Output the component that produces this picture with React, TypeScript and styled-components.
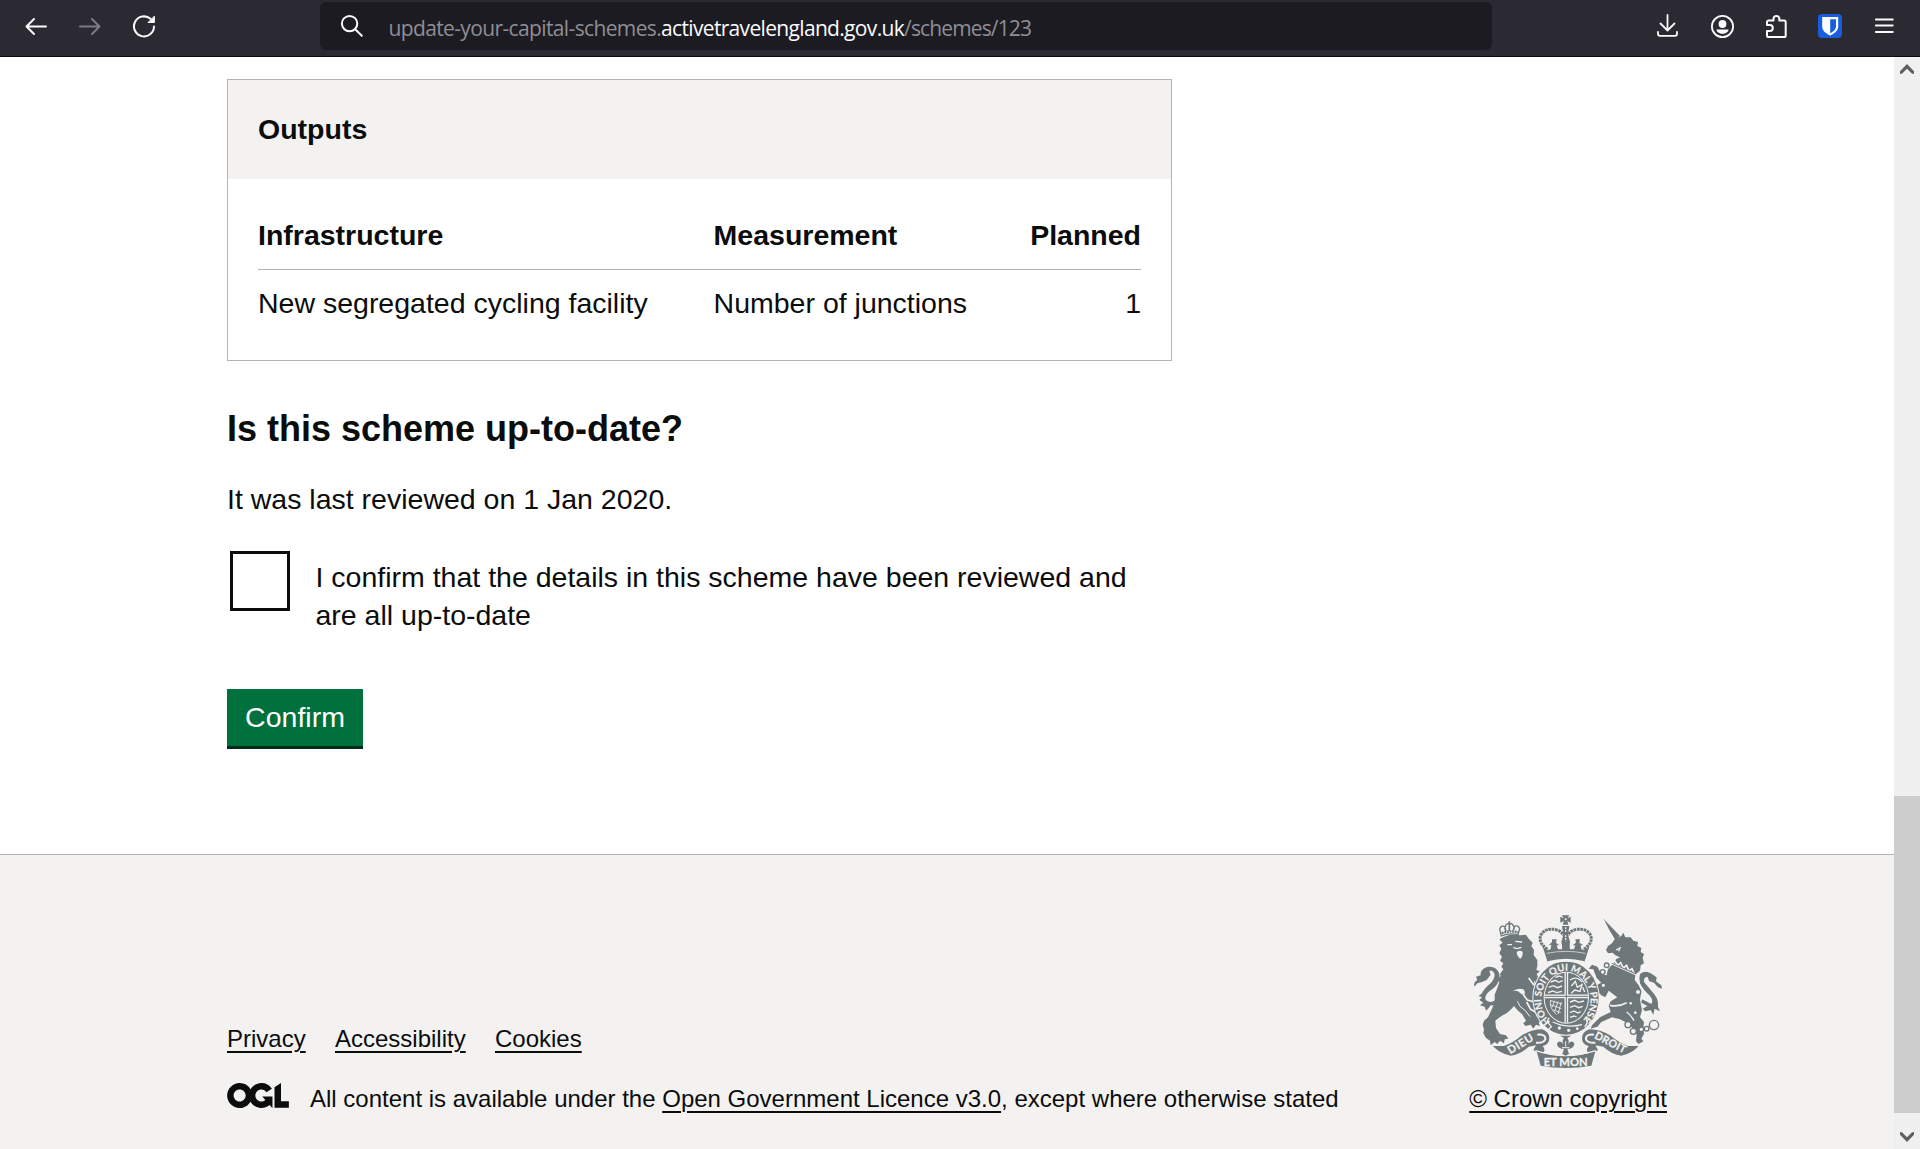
import React from "react";
import styled, { createGlobalStyle } from "styled-components";

const ink = "#0b0c0c";
const rule = "#b1b4b6";
const shade = "#f3f2f1";
const crest = "#6e7779";

const GlobalStyle = createGlobalStyle`
  *, *::before, *::after { box-sizing: border-box; }
  html, body { margin: 0; height: 100%; overflow: hidden; background: #fff; }
  h1, h2, h3, p { margin: 0; }
`;

const Window = styled.div`
  display: flex;
  flex-direction: column;
  width: 100%;
  height: 1149px;
  overflow: hidden;
  color: ${ink};
  font-family: "Liberation Sans", Arial, sans-serif;
`;

const Toolbar = styled.header`
  display: flex;
  align-items: flex-start;
  flex: none;
  height: 57px;
  padding-top: 2px;
  background: #2b2a33;
  border-bottom: 1px solid #0c0b10;
`;

const NavButtons = styled.nav`
  display: flex;
  gap: 30px;
  width: 320px;
  padding: 12px 0 0 24px;
`;

const AddressBar = styled.div`
  display: flex;
  align-items: flex-start;
  width: 1172px;
  height: 48px;
  padding: 12px 0 0 20px;
  background: #1c1b22;
  border-radius: 6px;
`;

const Address = styled.div`
  display: flex;
  margin-left: 24.5px;
  font-family: "Open Sans", "Noto Sans", sans-serif;
  font-size: 21px;
  line-height: 28px;
  white-space: nowrap;
`;

const AddressPart = styled.span<{ $strong?: boolean; $track: number }>`
  color: ${(p) => (p.$strong ? "#fbfbfe" : "#8f8e94")};
  letter-spacing: ${(p) => p.$track}px;
`;

const ToolIcons = styled.div`
  display: flex;
  gap: 30px;
  margin-left: auto;
  padding: 12px 24px 0 0;
`;

const Glyph = styled.svg<{ $dim?: boolean }>`
  display: block;
  flex: none;
  width: 24px;
  height: 24px;
  fill: none;
  stroke: ${(p) => (p.$dim ? "#7c7b81" : "#fbfbfe")};
  stroke-width: 2;
  stroke-linecap: round;
  stroke-linejoin: round;
`;

const Viewport = styled.div`
  display: flex;
  flex: 1;
  min-height: 0;
`;

const Page = styled.div`
  display: flex;
  flex-direction: column;
  flex: 1;
`;

const Main = styled.main`
  width: 1440px;
  height: 797px;
  margin: 0 auto;
  padding-top: 22px;
  font-size: 28.5px;
  line-height: 38px;
`;

const Column = styled.div`
  width: 945px;
`;

const Card = styled.section`
  height: 282px;
  border: 1px solid ${rule};
`;

const CardHeader = styled.div`
  height: 99px;
  padding: 30px 30px 0;
  background: ${shade};
`;

const CardTitle = styled.h2`
  font-size: 28.5px;
  line-height: 38px;
  font-weight: 700;
`;

const Table = styled.div`
  margin: 37px 30px 0;
`;

const Row = styled.div<{ $head?: boolean }>`
  display: grid;
  grid-template-columns: 455.6px 1fr auto;
  font-weight: ${(p) => (p.$head ? 700 : 400)};
  padding: ${(p) => (p.$head ? "0 0 15px" : "14px 0 0")};
  border-bottom: ${(p) => (p.$head ? `1px solid ${rule}` : "0")};
`;

const Question = styled.h2`
  margin-top: 45px;
  font-size: 36px;
  line-height: 45px;
  font-weight: 700;
`;

const Reviewed = styled.p`
  margin-top: 29px;
`;

const Choice = styled.label`
  display: flex;
  gap: 25.5px;
  margin-top: 33px;
  padding-left: 3px;
`;

const Box = styled.span`
  flex: none;
  width: 60px;
  height: 60px;
  border: 3px solid ${ink};
`;

const ChoiceText = styled.span`
  padding-top: 7px;
`;

const Confirm = styled.button`
  display: block;
  width: 136px;
  height: 60px;
  margin-top: 55px;
  padding: 0 0 1px;
  border: 0;
  border-bottom: 3px solid #002d18;
  background: #00703c;
  color: #fff;
  font: 28.5px/38px "Liberation Sans", Arial, sans-serif;
`;

const Footer = styled.footer`
  flex: 1;
  padding-top: 60px;
  background: ${shade};
  border-top: 1px solid ${rule};
  font-size: 24px;
  line-height: 30px;
`;

const FooterInner = styled.div`
  display: flex;
  justify-content: space-between;
  align-items: flex-end;
  width: 1440px;
  margin: 0 auto;
`;

const FooterLinks = styled.nav`
  display: flex;
  gap: 29.3px;
  margin-bottom: 30px;
`;

const Link = styled.a`
  color: ${ink};
  text-decoration: underline;
  text-decoration-thickness: 2px;
  text-underline-offset: 4px;
`;

const Licence = styled.div`
  display: flex;
`;

const OglLogo = styled.svg`
  display: block;
  width: 62px;
  height: 25px;
  margin: -1px 21px 0 0;
  fill: ${ink};
`;

const Copyright = styled.div`
  display: flex;
  flex-direction: column;
  align-items: center;
`;

const Arms = styled.svg`
  display: block;
  width: 188px;
  height: 153px;
  margin: 0 0 16px;
`;

const Scrollbar = styled.div`
  display: flex;
  flex-direction: column;
  align-items: center;
  flex: none;
  width: 26px;
  padding: 7px 0;
  background: #f0f0f0;
`;

const Thumb = styled.div`
  width: 26px;
  height: 317px;
  margin: auto 0 19px;
  background: #cdcdcd;
`;

const Chevron = styled.svg`
  flex: none;
  display: block;
  width: 14px;
  height: 10px;
  fill: #606060;
`;

const Lion = () => (
  <g>
    <path d="M124 108 L119 88 Q122 74 136 80 Q138 70 148 70 Q158 70 161 79 Q175 74 179 86 L174 104 Q148 98 124 108 Z" fill="none" stroke={crest} strokeWidth="4" />
    <path d="M125 100 Q150 90 175 97" stroke={crest} strokeWidth="7" fill="none" strokeDasharray="6 2" />
    <path d="M148 64 V92 M134 82 L138 94 M163 80 L160 91" stroke={crest} strokeWidth="5" fill="none" />
    <path
      fill={crest}
      d="M118 118 Q150 98 180 106 L198 104 L206 116 L218 128 L214 138 L222 150 L221 165 L232 180 L232 198
      L229 210 L240 214 L230 222 L236 236 L228 250 L222 240 L224 258 L236 270 L228 290 L238 302 L230 312 L236 340
      L226 330 L230 348 L243 362 L236 368 L240 378 L228 374 L220 386 L212 374 L196 378 L190 370 L198 362 L186 342
      L176 334 Q166 324 162 318 Q146 338 128 346 Q112 356 106 362 L108 384 L120 402 L138 406 L145 416 L134 418
      L132 430 L120 422 L112 432 L104 426 L92 436 L90 422 L78 414 L70 400 L72 388 L68 374 L72 362 L84 352 L96 326
      L104 306 L104 284 L112 264 L118 246 L112 240 L122 228 L120 222 L130 208 L124 200 L130 190 L120 182 L126 170 L118 160
      L124 146 L118 136 L128 128 Z"
    />
    <path
      fill={crest}
      d="M43 260 Q40 246 52 240 L48 230 L62 226 Q60 212 74 204 Q92 196 108 206 Q124 220 116 244 Q108 262 90 272
      Q74 284 76 298 Q84 310 100 304 L112 296 L110 308 Q100 318 92 316 L86 324 L78 332 L74 320 L60 316 L70 308
      L58 300 L66 292 L56 288 L66 280 Q72 266 92 250 Q108 232 102 218 Q94 208 88 214 L92 224 L80 240 L66 246 L52 250 Z"
    />
    <path d="M142 134 L156 134 M166 124 L186 126 M160 143 L172 146 L184 142" stroke={shade} strokeWidth="4" fill="none" />
    <path d="M170 156 Q180 148 188 156 Q189 170 181 176 Q171 170 170 156 Z" fill={shade} />
    <path d="M158 274 Q172 262 190 268 Q198 276 192 286 Q182 282 174 274 Q166 270 158 274 Z" fill={shade} />
    <path d="M206 234 L222 256 M190 284 L202 300 L224 306 M200 306 L212 328 L226 336" stroke={shade} strokeWidth="5" fill="none" />
    <path d="M172 304 Q176 320 196 332 L210 350" stroke={shade} strokeWidth="3" fill="none" />
  </g>
);

const Unicorn = () => (
  <g>
    <path d="M430 54 L436 62 L480 108 L466 120 L446 86 Z" fill={crest} />
    <path
      fill={crest}
      d="M464 118 L484 108 L490 98 L496 112 L512 112 L520 122 L534 126 L532 138 L544 144 L542 156 L552 162 L548 174
      L552 190 L542 196 L540 212 L528 222 L462 190 L468 178 L480 172 L466 166 L458 158 L444 160 L438 150 L444 138 L456 130 Z"
    />
    <path
      fill={crest}
      d="M456 194 L526 226 L524 240 L536 256 L544 272 L540 300 L546 330 L540 352 L552 366 L550 384 L552 402
      L544 416 L550 424 L536 432 L528 424 L530 404 L522 388 L500 368 L480 358 L456 352 L424 366 L412 380 L392 386
      L396 376 L420 352 L452 336 L446 318 L452 304 L472 292 L446 272 L436 292 L424 286 L410 272 L412 254 L424 248
      L410 234 L400 208 L386 206 L396 194 L412 200 L424 222 L440 226 L444 208 Z"
    />
    <path
      fill={crest}
      d="M540 222 Q556 210 572 220 L590 232 L588 244 L604 256 L606 266 L594 262 L582 248 L568 244 L562 230
      Q550 232 552 246 Q566 262 584 284 Q596 300 594 322 L600 334 L584 326 L580 344 L572 330 L556 334 L548 326
      L562 318 L544 308 L546 298 L574 312 Q582 302 568 286 Q548 268 540 250 Q536 234 540 222 Z"
    />
    <path d="M468 150 L480 144 L476 154" stroke={shade} strokeWidth="4" fill="none" />
    <path d="M462 180 L474 196 L482 188 L490 204 L500 196 L506 212 L516 206 L522 220" stroke={shade} strokeWidth="5" fill="none" />
    <path d="M456 190 L528 222" stroke={crest} strokeWidth="3" />
    <path d="M450 316 Q474 322 500 308" stroke={shade} strokeWidth="5" fill="none" />
    <path d="M500 336 Q512 344 522 362" stroke={shade} strokeWidth="4" fill="none" />
    {[
      [428, 216, 7],
      [440, 196, 7],
      [430, 256, 7],
      [534, 276, 8],
      [512, 310, 6],
      [526, 338, 6],
      [504, 374, 9],
      [520, 394, 9],
      [544, 388, 7],
      [560, 386, 7],
      [582, 375, 14],
    ].map(([x, y, r]) => (
      <circle key={`${x}-${y}`} cx={x} cy={y} r={r} fill={shade} stroke={crest} strokeWidth="4" />
    ))}
  </g>
);

const Crown = () => (
  <g>
    <path d="M305 46 H328 L322 55 L332 50 V68 L322 63 L325 74 H308 L312 63 L301 68 V50 L312 55 Z" fill={crest} />
    <circle cx="317" cy="58" r="3" fill={shade} />
    <path d="M262 148 Q234 128 242 106 Q254 84 284 88 Q304 92 310 106" fill="none" stroke={crest} strokeWidth="9" strokeDasharray="8 2" />
    <path d="M372 148 Q400 128 392 106 Q380 84 350 88 Q330 92 324 106" fill="none" stroke={crest} strokeWidth="9" strokeDasharray="8 2" />
    <path d="M306 78 H328 L324 104 L330 126 L326 148 H308 L304 126 L310 104 Z" fill={crest} />
    <path d="M317 82 V98 M317 106 V124" stroke={shade} strokeWidth="4" strokeDasharray="5 3" />
    <path
      fill={crest}
      d="M248 140 L262 150 L272 148 L274 134 L266 136 L276 126 L276 118 H290 L288 128 L298 136 L290 136 L294 148 L306 148
      L308 132 H328 L330 148 L342 148 L346 136 L338 136 L348 128 L346 118 H360 L358 128 L370 136 L362 136 L364 148
      L374 150 L388 140 L372 190 Q318 172 264 190 Z"
    />
    <path d="M260 160 Q318 148 376 160" fill="none" stroke={shade} strokeWidth="2" />
    <path d="M262 184 Q318 168 374 184 L372 194 Q318 176 264 194 Z" fill={shade} />
    <path d="M268 178 Q318 166 368 178" fill="none" stroke={crest} strokeWidth="3" />
  </g>
);

const Shield = () => (
  <g>
    <ellipse cx="318" cy="294" rx="101" ry="113" fill={shade} />
    <ellipse cx="318" cy="294" rx="98" ry="110" fill={crest} />
    <ellipse cx="319" cy="293" rx="68" ry="78" fill={shade} />
    <ellipse cx="319" cy="293" rx="65" ry="75" fill={crest} />
    <g fill="none" stroke={shade}>
      <path d="M319 217 V369 M254 289 H384" strokeWidth="11" />
      <path d="M272 246 l14 -5 l10 6 l12 -5 M266 262 l14 -5 l12 6 l14 -5 M264 278 l14 -5 l12 5 l16 -4 M286 232 l12 -4 l10 4" strokeWidth="4" />
      <path d="M330 240 Q350 226 366 246 M334 258 L346 244 L352 262 L366 254 L360 274 L344 270 L334 280 M368 262 L374 276" strokeWidth="4" />
      <path d="M330 306 l14 -5 l12 6 l16 -4 M330 322 l14 -5 l12 6 l12 -4 M330 338 l12 -5 l12 6 l8 -4 M330 352 l12 -4 l8 3" strokeWidth="4" />
      <path d="M272 300 Q266 324 290 344 M284 302 L276 322 M294 304 L284 334 M304 306 L294 342 M272 314 L304 326 M272 302 L306 312 M280 330 L302 338" strokeWidth="2.500" />
    </g>
    <path d="M319 217 V369 M254 289 H384" stroke={crest} strokeWidth="3" fill="none" />
    <path id="garter" d="M273 367 A 74 86 0 1 1 368 362" fill="none" />
    <text fill={shade} stroke={shade} strokeWidth="0.600" fontFamily="Lato, sans-serif" fontSize="29" fontWeight="700">
      <textPath href="#garter" startOffset="2" textLength="392" lengthAdjust="spacing">
        HONI SOIT QUI MAL Y PENSE
      </textPath>
    </text>
    <path d="M268 354 Q258 362 266 370 L274 380 L264 390 M278 366 Q320 386 366 374 M376 352 Q388 366 374 380" stroke={shade} strokeWidth="4" fill="none" />
    <circle cx="298" cy="384" r="5" fill={shade} />
    <circle cx="326" cy="391" r="5" fill={shade} />
    <circle cx="352" cy="386" r="4" fill={shade} />
  </g>
);

const Ribbon = () => (
  <g>
    <path
      fill={crest}
      d="M98 438 L132 438 Q160 428 186 406 Q214 388 246 388 Q268 396 268 414 Q268 434 248 438 Q262 456 240 462
      L220 450 L228 436 L206 440 Q180 464 152 467 Q122 462 98 438 Z"
    />
    <path
      fill={crest}
      d="M536 438 L504 438 Q476 428 450 406 Q422 388 388 388 Q366 396 366 414 Q366 434 386 438 Q372 456 394 462
      L414 450 L406 436 L430 440 Q456 464 484 467 Q514 462 536 438 Z"
    />
    <path d="M232 404 Q258 402 256 418 Q250 430 228 428 M402 404 Q376 402 378 418 Q384 430 406 428" fill="none" stroke={shade} strokeWidth="6" />
    <path d="M230 454 Q316 484 406 454 L394 497 Q318 511 242 497 Z" fill={crest} />
    <path d="M226 452 Q316 480 408 452" fill="none" stroke={shade} strokeWidth="4" />
    <g fill={shade} stroke={shade} strokeWidth="0.800" fontFamily="Lato, sans-serif" fontWeight="700">
      <text transform="translate(151 463) rotate(-31)" fontSize="33" textLength="84">DIEU</text>
      <text x="251" y="497" fontSize="34" textLength="132" lengthAdjust="spacingAndGlyphs">ET MON</text>
      <text transform="translate(401 414) rotate(27)" fontSize="32" textLength="102">DROIT</text>
    </g>
    <path
      fill={crest}
      d="M300 407 H334 L322 414 Q330 424 323 434 Q334 418 343 430 Q344 442 330 446 L322 446 L327 462 L317 467 L307 462
      L312 446 L304 446 Q290 442 291 430 Q300 418 311 434 Q304 424 312 414 Z"
    />
    <path d="M317 424 V440 M306 443 H328" stroke={shade} strokeWidth="3" />
  </g>
);

export default function App() {
  return (
    <Window>
      <GlobalStyle />
      <Toolbar>
        <NavButtons>
          <Glyph viewBox="0 0 24 24">
            <path d="M22 12.5H2.500M10 5 2.500 12.500l7.500 7.500" />
          </Glyph>
          <Glyph viewBox="0 0 24 24" $dim>
            <path d="M2 12.500h19.500M14 5l7.500 7.500-7.500 7.500" />
          </Glyph>
          <Glyph viewBox="0 0 24 24">
            <path d="M22 12.500A10 10 0 1 1 18.500 4.800" />
            <path d="M22.400 2.500v6h-6z" fill="#fbfbfe" strokeWidth="1" />
          </Glyph>
        </NavButtons>
        <AddressBar>
          <Glyph viewBox="0 0 24 24">
            <circle cx="9.600" cy="9.600" r="7.700" />
            <path d="M15.200 15.200l6.600 6.600" />
          </Glyph>
          <Address>
            <AddressPart $track={-0.63}>update-your-capital-schemes.</AddressPart>
            <AddressPart $strong $track={-0.67}>activetravelengland.gov.uk</AddressPart>
            <AddressPart $track={-0.86}>/schemes/123</AddressPart>
          </Address>
        </AddressBar>
        <ToolIcons>
          <Glyph viewBox="0 0 24 24">
            <path d="M11.500 1v15M4.500 9.500l7 7 7-7M2 17.800v2a2 2 0 0 0 2 2h15a2 2 0 0 0 2-2v-2" strokeWidth="1.800" />
          </Glyph>
          <Glyph viewBox="0 0 24 24">
            <circle cx="12.500" cy="12.500" r="10.600" strokeWidth="1.800" />
            <circle cx="12.500" cy="10" r="3.900" fill="#fbfbfe" stroke="none" />
            <path d="M6.500 15.500h12c0 2.600-3 4.200-6 4.200s-6-1.600-6-4.200z" fill="#fbfbfe" stroke="none" />
          </Glyph>
          <Glyph viewBox="0 0 24 24">
            <path d="M3 11V8a1.600 1.600 0 0 1 1.600-1.600H9.500V4.300a3 3 0 0 1 5.800 0v2.100h4.800A1.600 1.600 0 0 1 21.700 8v13.400a1.600 1.600 0 0 1-1.600 1.600H4.600a1.600 1.600 0 0 1-1.600-1.600V17h2.800a3 3 0 0 0 0-6z" />
          </Glyph>
          <Glyph viewBox="0 0 24 24">
            <rect width="24" height="24" rx="4" fill="#175ddc" stroke="none" />
            <path d="M4.200 3h16v9.500c0 4-3.300 6.900-8 9.100-4.700-2.200-8-5.100-8-9.100z" fill="#fff" stroke="none" />
            <path d="M12.200 5.200h5.800v7.300c0 2.800-2.300 4.800-5.800 6.700z" fill="#175ddc" stroke="none" />
          </Glyph>
          <Glyph viewBox="0 0 24 24">
            <path d="M3.800 5.500h17M3.800 11.500h17M3.800 18h17" strokeWidth="1.800" />
          </Glyph>
        </ToolIcons>
      </Toolbar>
      <Viewport>
        <Page>
          <Main>
            <Column>
              <Card>
                <CardHeader>
                  <CardTitle>Outputs</CardTitle>
                </CardHeader>
                <Table>
                  <Row $head>
                    <span>Infrastructure</span>
                    <span>Measurement</span>
                    <span>Planned</span>
                  </Row>
                  <Row>
                    <span>New segregated cycling facility</span>
                    <span>Number of junctions</span>
                    <span>1</span>
                  </Row>
                </Table>
              </Card>
              <Question>Is this scheme up-to-date?</Question>
              <Reviewed>It was last reviewed on 1 Jan 2020.</Reviewed>
              <Choice>
                <Box />
                <ChoiceText>
                  I confirm that the details in this scheme have been reviewed and are all up-to-date
                </ChoiceText>
              </Choice>
              <Confirm>Confirm</Confirm>
            </Column>
          </Main>
          <Footer>
            <FooterInner>
              <div>
                <FooterLinks>
                  <Link>Privacy</Link>
                  <Link>Accessibility</Link>
                  <Link>Cookies</Link>
                </FooterLinks>
                <Licence>
                  <OglLogo viewBox="0 0 483.2 195.7" aria-label="Open Government Licence">
                    <path d="M421.5 142.8V.1l-50.7 32.3v161.1h112.4v-50.7zm-122.3-9.6A47.12 47.12 0 0 1 221 97.8c0-26 21.100-47.100 47.100-47.100 16.700 0 31.400 8.700 39.700 21.800l42.700-27.200A97.630 97.630 0 0 0 268.100 0c-36.500 0-68.300 20.100-85.100 49.700A98 98 0 0 0 97.800 0C43.900 0 0 43.900 0 97.800s43.900 97.800 97.800 97.800c36.500 0 68.300-20.100 85.100-49.700a97.760 97.760 0 0 0 149.600 25.400l19.400 22.200h3v-87.800h-80l24.300 27.500zM97.800 145c-26 0-47.100-21.100-47.100-47.100s21.100-47.100 47.100-47.100 47.100 21.100 47.100 47.100S123.800 145 97.800 145" />
                  </OglLogo>
                  <span>
                    All content is available under the <Link>Open Government Licence v3.0</Link>, except where otherwise
                    stated
                  </span>
                </Licence>
              </div>
              <Copyright>
                <Arms viewBox="42 45 564 459">
                  <Lion />
                  <Unicorn />
                  <Shield />
                  <Crown />
                  <Ribbon />
                </Arms>
                <Link>© Crown copyright</Link>
              </Copyright>
            </FooterInner>
          </Footer>
        </Page>
        <Scrollbar>
          <Chevron viewBox="0 0 14 10">
            <path d="M7 0 14 7.200V10L11.800 9.500 7 4.800 2.200 9.500 0 10V7.200z" />
          </Chevron>
          <Thumb />
          <Chevron viewBox="0 0 14 10">
            <path d="M7 10 14 2.800V0L11.800.5 7 5.200 2.200.5 0 0v2.800z" />
          </Chevron>
        </Scrollbar>
      </Viewport>
    </Window>
  );
}
